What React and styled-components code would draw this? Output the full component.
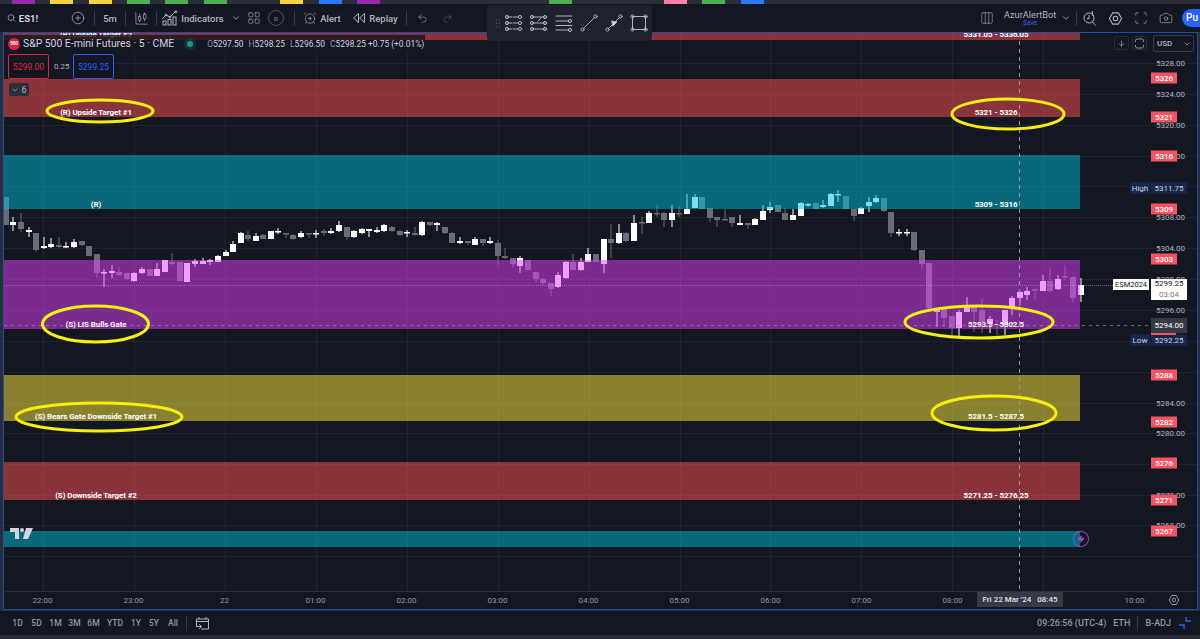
import React from 'react';
import styled, { createGlobalStyle } from 'styled-components';
import { Search, CirclePlus, CandlestickChart, ChevronDown, LayoutGrid, AlarmClockPlus, Undo2, Redo2, Columns3, Scan, Camera, ArrowDown, Zap } from 'lucide-react';

const GlobalStyle = createGlobalStyle`
  html, body { margin: 0; padding: 0; background: #2a2e39; }
  body { font-family: Roboto, "Liberation Sans", sans-serif; overflow: hidden; }
`;

const Page = styled.div`
  width: 1200px;
  height: 639px;
  overflow: hidden;
  position: relative;
  display: flex;
  flex-direction: column;
  background: #2a2e39;
`;

const TabStrip = styled.div`
  height: 4px;
  padding-left: 12px;
  display: flex;
  gap: 15.35px;
`;

const TabMark = styled.span`
  width: 23px;
  background: ${p => p.$color};
`;

const Toolbar = styled.div`
  height: 28px;
  background: #131722;
  display: flex;
  align-items: center;
  color: #b2b5be;
  font-size: 9.5px;
  font-weight: 500;
  padding-left: 7px;
`;

const Tool = styled.div`
  display: flex;
  align-items: center;
  justify-content: center;
  box-sizing: border-box;
  gap: ${p => p.$gap || 3}px;
  width: ${p => p.$w}px;
  margin-left: ${p => p.$ml || 0}px;
  margin-right: ${p => p.$mr || 0}px;
  padding-left: ${p => p.$pl || 0}px;
  flex: none;
  color: ${p => p.$dim ? '#5d606b' : 'inherit'};
`;

const Sep = styled.span`
  width: 1px;
  height: 15px;
  background: #363a45;
  flex: none;
  margin-left: ${p => p.$ml || 0}px;
  margin-right: ${p => p.$mr || 0}px;
`;

const Ticker = styled.b`
  color: #d1d4dc;
  font-size: 9.5px;
`;

const RoundD = styled.span`
  width: 14px;
  height: 14px;
  border: 1px solid #50535e;
  border-radius: 50%;
  font-size: 6px;
  display: flex;
  align-items: center;
  justify-content: center;
  color: #787b86;
`;

const DrawBar = styled.div`
  position: absolute;
  left: 487px;
  top: 5px;
  width: 165px;
  height: 36px;
  border-radius: 4px;
  background: #1e222d;
  display: flex;
  align-items: center;
  padding-left: 8px;
  gap: 5px;
  box-sizing: border-box;
  z-index: 5;
`;

const Grip = styled.span`
  width: 5px;
  height: 10px;
  margin-right: -1px;
  background-image: radial-gradient(#4c4f5a 1px, transparent 1px);
  background-size: 3px 3.5px;
`;

const RightTools = styled.div`
  margin-left: auto;
  display: flex;
  align-items: center;
`;

const BotName = styled.div`
  width: 52px;
  text-align: center;
  line-height: 9px;
  font-size: 9.2px;
  font-weight: 400;
  color: #b2b5be;
  padding-top: 2px;
  white-space: nowrap;
  small { display: block; font-size: 6.5px; color: #2962ff; }
`;

const Publish = styled.div`
  width: 18px;
  height: 18px;
  margin-left: 4px;
  background: #2962ff;
  color: #fff;
  border-radius: 9px 0 0 9px;
  font-size: 10px;
  padding-left: 4px;
  line-height: 18px;
  box-sizing: border-box;
  overflow: hidden;
`;

const Frame = styled.div`
  margin: 0 2px 0 3px;
  height: 578px;
  box-sizing: border-box;
  border: 1px solid #1f4db0;
  background: #131722;
  display: flex;
  flex-direction: column;
`;

const ChartBody = styled.div`
  position: relative;
  height: 558px;
  overflow: hidden;
  display: flex;
`;

const Pane = styled.div`
  position: relative;
  width: 1106px;
  flex: none;
`;

const Layer = styled.svg`
  position: absolute;
  left: 0;
  top: 0;
  pointer-events: none;
`;

const Zone = styled.div`
  position: absolute;
  left: 0;
  width: 1076px;
  top: ${p => p.$top - 33}px;
  height: ${p => p.$height}px;
  background: ${p => p.$color};
  display: flex;
  align-items: flex-end;
  justify-content: space-between;
  color: #fff;
  font-size: 8px;
  font-weight: 700;
  letter-spacing: -0.1px;
  padding-bottom: ${p => p.$pad ?? 0}px;
  box-sizing: border-box;
  line-height: 9px;
`;

const ZoneNote = styled.span`
  width: ${p => p.$side === 'left' ? 184 : 168}px;
  text-align: center;
  white-space: nowrap;
`;

const Legend = styled.div`
  position: absolute;
  left: 0;
  top: 2px;
  height: 17px;
  width: 421px;
  display: flex;
  align-items: center;
  background: rgba(19, 23, 34, 0.82);
  color: #d1d4dc;
  font-size: 10.4px;
  padding-left: 4px;
  box-sizing: border-box;
  white-space: nowrap;
`;

const SymbolBadge = styled.span`
  width: 12px;
  height: 12px;
  flex: none;
  border-radius: 50%;
  background: #d9233a;
  color: #fff;
  font-size: 4.5px;
  font-weight: 700;
  display: flex;
  align-items: center;
  justify-content: center;
  margin-right: 3px;
`;

const LiveDot = styled.span`
  width: 6px;
  height: 6px;
  flex: none;
  border-radius: 50%;
  background: #1a9a80;
  box-shadow: 0 0 0 3px rgba(26, 154, 128, 0.2);
  margin: 0 14px 0 13px;
`;

const Ohlc = styled.span`
  font-size: 8.4px;
  i { font-style: normal; color: #9598a1; margin: 0 0 0 3px; }
  i:first-child { margin-left: 0; }
`;

const QuoteRow = styled.div`
  position: absolute;
  left: 0;
  top: 19px;
  width: 112px;
  height: 27px;
  padding: 2px 0 0 4px;
  box-sizing: border-box;
  display: flex;
  gap: 5px;
  background: rgba(19, 23, 34, 0.82);
  align-items: flex-start;
`;

const Quote = styled.span`
  width: 41px;
  height: 25px;
  box-sizing: border-box;
  border: 1px solid ${p => p.$color};
  border-radius: 2px;
  color: ${p => p.$color};
  background: #131722;
  font-size: 8.5px;
  display: flex;
  align-items: center;
  justify-content: center;
`;

const Spread = styled.span`
  align-self: center;
  color: #b2b5be;
  font-size: 8px;
  width: 14px;
  text-align: center;
`;

const Collapse = styled.div`
  position: absolute;
  left: 5px;
  top: 50px;
  width: 20px;
  height: 13px;
  border-radius: 2px;
  background: #2a2e39;
  color: #b2b5be;
  font-size: 9px;
  display: flex;
  align-items: center;
  justify-content: center;
  gap: 2px;
`;

const TvLogo = styled.svg`
  position: absolute;
  left: 6px;
  top: 494px;
`;

const BoltMark = styled.div`
  position: absolute;
  left: 1069px;
  top: 498px;
  width: 14px;
  height: 14px;
  border-radius: 50%;
  border: 1px solid #a23ec0;
  border-left-color: #4272d6;
  color: #b044d0;
  display: flex;
  align-items: center;
  justify-content: center;
`;

const PriceAxis = styled.div`
  position: relative;
  flex: 1;
  color: #b2b5be;
  font-size: 8px;
`;

const Tick = styled.span`
  position: absolute;
  left: 46px;
  top: ${p => p.$y - 33}px;
  transform: translateY(-50%);
`;

const Tag = styled.span`
  position: absolute;
  left: 41px;
  top: ${p => p.$y - 33}px;
  transform: translateY(-50%);
  width: 26px;
  height: 11px;
  line-height: 11px;
  text-align: center;
  background: #f7525f;
  color: #fff;
  font-size: 8px;
  font-weight: 500;
`;

const NavyTag = styled.span`
  position: absolute;
  left: ${p => p.$x}px;
  top: ${p => p.$y - 33}px;
  transform: translateY(-50%);
  width: ${p => p.$w}px;
  height: 11px;
  line-height: 11px;
  text-align: center;
  background: #14284f;
  color: #d1d4dc;
  font-size: 8px;
`;

const CloseTag = styled.span`
  position: absolute;
  left: 41px;
  top: 246px;
  width: 36px;
  height: 21px;
  background: #fff;
  color: #131722;
  text-align: center;
  font-size: 8px;
  line-height: 10.5px;
  small { display: block; font-size: 8px; color: #787b86; }
`;

const SymbolTag = styled.span`
  position: absolute;
  left: 3px;
  top: 246px;
  width: 36px;
  height: 11px;
  line-height: 11px;
  background: #fff;
  color: #131722;
  text-align: center;
  font-size: 7.5px;
`;

const CrossTag = styled.span`
  position: absolute;
  left: 41px;
  top: 285px;
  width: 36px;
  height: 15px;
  line-height: 15px;
  background: #363a45;
  color: #fff;
  font-size: 8px;
  text-align: center;
  &::after {
    content: '';
    position: absolute;
    left: 0;
    top: 15px;
    width: 25px;
    height: 2px;
    background: #f7525f;
  }
`;

const PaneButton = styled.span`
  position: absolute;
  left: ${p => p.$x}px;
  top: 3px;
  width: 15px;
  height: 14px;
  box-sizing: border-box;
  border: 1px solid #2a2e39;
  border-radius: 3px;
  display: flex;
  align-items: center;
  justify-content: center;
  color: #9598a1;
`;

const CurrencyBox = styled.span`
  position: absolute;
  left: 43px;
  top: 2px;
  width: 41px;
  height: 17px;
  box-sizing: border-box;
  border: 1px solid #363a45;
  border-radius: 2px;
  font-size: 8px;
  font-weight: 500;
  display: flex;
  align-items: center;
  justify-content: space-between;
  padding: 0 2px 0 3px;
  color: #b2b5be;
`;

const TimeAxis = styled.div`
  position: relative;
  height: 18px;
  border-top: 1px solid #2a2e39;
  box-sizing: border-box;
  display: grid;
  grid-template-columns: repeat(13, 91px);
  margin-left: -7px;
  align-items: center;
  color: #9598a1;
  font-size: 8px;
`;

const TimeMark = styled.span`
  text-align: center;
`;

const CrossTime = styled.span`
  position: absolute;
  left: 980px;
  top: 0;
  width: 86px;
  height: 15px;
  line-height: 15px;
  text-align: center;
  background: #363a45;
  color: #e0e3eb;
  font-size: 8px;
  font-weight: 500;
  white-space: pre;
`;

const AxisGear = styled.span`
  position: absolute;
  left: 1171px;
  top: 2px;
  color: #b2b5be;
`;

const BottomBar = styled.div`
  margin-top: 1px;
  height: 24px;
  background: #131722;
  display: flex;
  align-items: center;
  padding: 0 8px 0 8px;
  color: #9598a1;
  font-size: 8.5px;
  font-weight: 500;
`;

const Range = styled.span`
  width: ${p => p.$w || 19}px;
  text-align: center;
  flex: none;
`;

const BarRight = styled.div`
  margin-left: auto;
  display: flex;
  align-items: center;
  gap: 7px;
  font-size: 9px;
`;

const tabs = ['#9c27b0', '#f9d23c', '#f9d23c', '#4caf50', '#4caf50', '#4caf50', 'transparent', '#f9d23c', '#2979ff', '#9c27b0', 'transparent', 'transparent', 'transparent', 'transparent', '#4caf50', 'transparent', 'transparent', '#ff80ab', '#4caf50', '#2979ff'];

const zones = [
  { top: 33, height: 7, color: 'rgba(255,82,82,.5)', left: '(R) Upside Target #2', right: '5331.05 - 5336.05', pad: 1 },
  { top: 79, height: 38, color: 'rgba(255,82,82,.5)', left: '(R) Upside Target #1', right: '5321 - 5326', pad: 0 },
  { top: 155, height: 54, color: 'rgba(0,188,212,.5)', left: '(R)', right: '5309 - 5316', pad: 0 },
  { top: 260, height: 69, color: 'rgba(224,64,251,.5)', left: '(S) LIS Bulls Gate', right: '5293.5 - 5302.5', pad: 0 },
  { top: 375, height: 46, color: 'rgba(255,235,59,.5)', left: '(S) Bears Gate Downside Target #1', right: '5281.5 - 5287.5', pad: 0 },
  { top: 462, height: 38, color: 'rgba(255,82,82,.5)', left: '(S) Downside Target #2', right: '5271.25 - 5276.25', pad: 0 },
  { top: 531, height: 16, color: 'rgba(0,188,212,.5)' },
];

// x, kind, body top, body bottom, wick top, wick bottom (page pixels)
const candles = [
  [6,'d',197,225,197,225],[13,'u',222,225,217,231],[21,'d',222,229,213,232],[29,'u',230,232,227,237],[36,'d',233,250,233,252],
  [44,'u',246,248,237,249],[51,'u',244,247,238,248],[59,'d',245,247,237,248],[66,'u',246,247,242,248],[74,'u',242,247,239,248],
  [82,'d',241,245,241,246],[89,'d',246,256,246,256],[97,'d',254,273,254,278],[104,'u',272,273,269,287],[112,'u',271,273,265,278],
  [119,'d',272,275,267,276],[127,'d',273,279,273,280],[134,'u',273,281,272,282],[142,'u',269,273,267,274],[150,'d',269,276,269,276],
  [157,'u',269,276,263,276],[165,'u',260,272,260,272],[172,'d',262,264,253,265],[180,'d',262,281,262,281],[187,'u',263,282,263,282],
  [195,'u',261,264,259,267],[203,'u',261,264,258,264],[210,'u',260,262,259,265],[218,'u',256,262,255,262],[226,'u',252,256,250,256],
  [233,'u',244,252,241,252],[241,'u',233,243,232,243],[248,'d',235,239,231,241],[256,'u',236,241,233,241],[263,'d',235,239,234,239],
  [271,'u',231,239,231,239],[278,'u',231,232,228,234],[286,'d',233,234,233,238],[293,'d',235,239,234,240],[301,'u',233,237,231,238],
  [309,'d',233,234,233,238],[316,'u',233,234,230,238],[324,'d',231,233,229,236],[331,'u',231,233,228,234],[339,'u',225,231,221,232],
  [347,'d',227,237,227,240],[354,'u',231,237,230,238],[362,'u',229,233,228,234],[369,'u',229,231,229,237],[377,'u',230,232,227,233],
  [384,'u',225,231,224,232],[392,'d',227,231,226,232],[400,'d',231,235,230,236],[407,'u',232,233,230,237],[415,'d',233,235,227,236],
  [422,'u',222,235,221,236],[430,'d',222,225,222,226],[437,'u',223,225,222,231],[445,'d',227,233,227,234],[452,'d',233,243,232,243],
  [460,'u',241,243,237,244],[468,'d',241,243,241,245],[475,'u',239,245,237,245],[483,'d',239,243,239,246],[490,'u',241,243,237,244],
  [498,'d',243,256,240,265],[505,'d',256,258,248,259],[513,'d',258,264,258,267],[520,'u',258,266,256,273],[528,'d',260,270,260,271],
  [536,'d',272,279,272,282],[543,'d',279,283,278,285],[551,'d',283,289,283,296],[558,'u',275,287,272,288],[566,'u',262,278,261,279],
  [573,'d',262,270,254,270],[581,'u',262,270,258,271],[588,'u',254,262,248,262],[596,'d',254,262,254,262],[604,'u',239,264,239,273],
  [611,'d',239,243,224,258],[619,'u',233,243,224,244],[626,'d',233,241,232,242],[634,'u',223,241,215,241],[642,'d',222,223,217,234],
  [649,'u',213,223,211,223],[657,'d',213,214,205,217],[664,'d',213,220,212,227],[672,'u',213,220,205,227],[679,'d',213,214,206,217],
  [687,'u',209,214,194,214],[695,'u',197,208,194,208],[702,'d',197,209,197,209],[710,'d',208,218,208,222],[717,'d',217,220,217,227],
  [725,'d',219,220,209,220],[732,'d',217,223,217,227],[740,'u',223,225,215,225],[748,'d',223,225,223,229],[755,'u',219,225,218,225],
  [763,'u',211,220,205,220],[770,'u',207,210,202,213],[778,'d',205,212,205,212],[785,'d',213,220,208,220],[793,'u',215,220,209,220],
  [801,'u',203,216,202,216],[808,'u',204,205,203,207],[816,'d',203,209,203,209],[823,'u',205,207,200,208],[831,'u',194,206,193,206],
  [838,'u',194,195,190,202],[846,'d',196,209,196,209],[854,'d',209,216,209,221],[861,'u',208,214,207,214],[869,'u',202,206,197,212],
  [876,'u',198,202,195,203],[884,'d',198,211,198,212],[891,'d',212,233,212,237],[899,'u',232,233,229,236],[907,'u',232,233,229,236],
  [914,'d',232,250,232,251],[922,'d',250,264,250,269],[929,'d',263,308,263,309],[937,'u',310,312,310,327],[944,'d',309,318,309,327],
  [952,'d',316,328,316,337],[959,'u',312,328,310,337],[967,'u',306,312,297,312],[974,'d',307,312,307,332],[982,'d',310,322,298,333],
  [990,'u',319,324,316,333],[997,'d',324,325,320,335],[1005,'u',310,325,310,335],[1012,'u',298,309,296,315],[1020,'u',292,298,291,305],
  [1027,'u',291,295,287,300],[1035,'d',289,290,289,300],[1043,'u',281,291,275,291],[1050,'d',281,291,267,292],[1058,'u',279,289,275,290],
  [1065,'d',276,277,265,280],[1073,'d',277,298,276,302],[1081,'u',285,295,278,302],
];

const ellipses = [
  [100, 111, 53, 11], [1008, 114, 56, 15], [95.5, 324, 53, 18], [979, 322, 74, 16], [99, 417, 83, 14], [994, 413, 62, 17],
];

const ticks = [[63,'5328.00'],[94,'5324.00'],[125,'5320.00'],[156,'5316.00'],[217,'5308.00'],[248,'5304.00'],[279,'5300.00'],[310,'5296.00'],[403,'5284.00'],[433,'5280.00'],[495,'5272.00'],[525,'5268.00']];
const tags = [[78,'5326'],[117,'5321'],[156,'5316'],[209,'5309'],[259,'5303'],[375,'5288'],[422,'5282'],[463,'5276'],[500,'5271'],[531,'5267']];
const times = ['22:00','23:00','22','01:00','02:00','03:00','04:00','05:00','06:00','07:00','08:00','','10:00'];
const ranges = [['1D'],['5D'],['1M'],['3M'],['6M'],['YTD',24],['1Y',18],['5Y',18],['All',20]];

// small drawing toolbar glyphs
const DrawIcon = ({ children }) => (
  <svg width="20" height="20" viewBox="0 0 20 20" fill="none" stroke="#b2b5be" strokeWidth="1" strokeLinecap="round">{children}</svg>
);

const Knob = ({ x, y }) => <circle cx={x} cy={y} r="1.6" />;

const drawIcons = [
  <><path d="M3 4h13M3 10h13M3 16h13" strokeDasharray="5 1.5" /><Knob x={3} y={4} /><Knob x={16} y={4} /><Knob x={3} y={10} /><Knob x={16} y={10} /><Knob x={3} y={16} /><Knob x={16} y={16} /></>,
  <><path d="M3 4h13M3 10h13M3 16h13" /><path d="M9 8l3-3" /><Knob x={3} y={4} /><Knob x={16} y={4} /><Knob x={3} y={10} /><Knob x={16} y={10} /><Knob x={3} y={16} /><Knob x={16} y={16} /></>,
  <><path d="M2 3h16M2 8h13M2 12.5h16M2 17h13" /><Knob x={16} y={8} /><Knob x={16} y={17} /></>,
  <><path d="M4.5 15.5L15.5 4.5" /><Knob x={3.5} y={16.5} /><Knob x={16.5} y={3.5} /></>,
  <><path d="M4.5 15.5L15.5 4.5" /><Knob x={3.5} y={16.5} /><Knob x={16.5} y={3.5} /><path d="M8 8l5 1-4 4z" fill="#d1d4dc" /></>,
  <><rect x="3.5" y="3.5" width="13" height="13" /><Knob x={3.5} y={3.5} /><Knob x={16.5} y={3.5} /><Knob x={3.5} y={16.5} /><Knob x={16.5} y={16.5} /></>,
];

const IndicatorsIcon = () => (
  <svg width="18" height="16" viewBox="0 0 18 16" fill="none" stroke="currentColor" strokeWidth="1">
    <path d="M1 9l4-4 4 2 6-6" />
    <circle cx="5" cy="5" r="1" /><circle cx="9" cy="7" r="1" /><circle cx="15" cy="1.8" r="1" />
    <rect x="2" y="11" width="3" height="4" /><rect x="7" y="9.5" width="3" height="5.5" /><rect x="12" y="7" width="3" height="8" />
  </svg>
);

const ReplayIcon = () => (
  <svg width="14" height="12" viewBox="0 0 14 12" fill="none" stroke="currentColor" strokeWidth="1">
    <path d="M6.5 1.5L1.5 6l5 4.5zM12.5 1.5L7.5 6l5 4.5z" strokeLinejoin="round" />
  </svg>
);

const GearHex = ({ size = 15 }) => (
  <svg width={size} height={size} viewBox="0 0 16 16" fill="none" stroke="currentColor" strokeWidth="1.1">
    <path d="M5 2h6l3.5 6-3.5 6H5L1.5 8z" strokeLinejoin="round" /><circle cx="8" cy="8" r="2.4" />
  </svg>
);

const ReplayClock = () => (
  <svg width="16" height="18" viewBox="0 0 16 18" fill="none" stroke="currentColor" strokeWidth="1">
    <circle cx="7" cy="9" r="5" /><path d="M10 2l1 5M10.5 13l3 3.5M7 6v3.5h-2" />
  </svg>
);

const ResetIcon = () => (
  <svg width="11" height="11" viewBox="0 0 11 11" fill="none" stroke="currentColor" strokeWidth="1">
    <path d="M1.5 4V2.8A1.8 1.8 0 0 1 3.3 1h4.4a1.8 1.8 0 0 1 1.8 1.8V4M1.5 7v1.2A1.8 1.8 0 0 0 3.3 10h4.4a1.8 1.8 0 0 0 1.8-1.8V7" />
  </svg>
);

const SessionIcon = () => (
  <svg width="15" height="15" viewBox="0 0 15 15" fill="none" stroke="#b2b5be" strokeWidth="1">
    <path d="M4 1v2M11 1v2M1.5 10V3h12v10H6M1.5 5.5h12M1 10.5h5M4 8l2.5 2.5L4 13" />
  </svg>
);

const BarSquiggle = () => (
  <svg width="14" height="14" viewBox="0 0 14 14" fill="none" stroke="#2962ff" strokeWidth="1.3">
    <path d="M1 9h5v4M8 1v4h5" />
  </svg>
);

const grid = () => {
  const xs = [43, 134, 225, 316, 407, 498, 589, 680, 770, 861, 952, 1043];
  const ys = [63, 94, 125, 156, 186, 217, 248, 279, 310, 341, 372, 403, 433, 464, 495, 525, 556];
  return (
    <g stroke="#1f2430" strokeWidth="1">
      {xs.map(x => <path key={x} d={`M${x + 0.5} 33V591`} />)}
      {ys.map(y => <path key={y} d={`M4 ${y + 0.5}H1197`} />)}
    </g>
  );
};

export default function App() {
  return (
    <Page>
      <GlobalStyle />
      <TabStrip>
        {tabs.map((c, i) => <TabMark key={i} $color={c} />)}
      </TabStrip>

      <Toolbar>
        <Tool $w={31} $gap={3}><Search size={10} /><Ticker>ES1!</Ticker></Tool>
        <Tool $w={48} $pl={32}><CirclePlus size={14} strokeWidth={1.2} /></Tool>
        <Tool $w={8} />
        <Sep />
        <Tool $w={30}>5m</Tool>
        <Sep />
        <Tool $w={30}><CandlestickChart size={15} strokeWidth={1.1} /></Tool>
        <Sep />
        <Tool $w={71} $gap={2}><IndicatorsIcon />Indicators</Tool>
        <Tool $w={16}><ChevronDown size={10} /></Tool>
        <Tool $w={20}><LayoutGrid size={14} strokeWidth={1} /></Tool>
        <Tool $w={24}><RoundD>D</RoundD></Tool>
        <Tool $w={6} />
        <Sep />
        <Tool $w={46} $gap={3} $ml={4}><AlarmClockPlus size={14} strokeWidth={1.1} />Alert</Tool>
        <Tool $w={50} $gap={3} $ml={5}><ReplayIcon />Replay</Tool>
        <Tool $w={6} />
        <Sep />
        <Tool $w={31}><Undo2 size={11} strokeWidth={1.2} /></Tool>
        <Tool $w={18} $dim><Redo2 size={11} strokeWidth={1.2} /></Tool>
        <RightTools>
          <Tool $w={22} $mr={6}><Columns3 size={14} strokeWidth={1} /></Tool>
          <BotName>AzurAlertBot<small>Save</small></BotName>
          <Tool $w={20}><ChevronDown size={10} /></Tool>
          <Sep />
          <Tool $w={26}><ReplayClock /></Tool>
          <Tool $w={25}><GearHex /></Tool>
          <Tool $w={25}><Scan size={14} strokeWidth={1.1} /></Tool>
          <Tool $w={25}><Camera size={14} strokeWidth={1.1} /></Tool>
          <Publish>Pu</Publish>
        </RightTools>
      </Toolbar>

      <DrawBar>
        <Grip />
        {drawIcons.map((g, i) => <DrawIcon key={i}>{g}</DrawIcon>)}
      </DrawBar>

      <Frame>
        <ChartBody>
          <Layer width="1193" height="558" viewBox="4 33 1193 558">
            {grid()}
            {candles.map(([x, kind, top, bot, wTop, wBot], i) => {
              const color = kind === 'u' ? '#ffffff' : '#6a6d78';
              return (
                <g key={i} fill={color}>
                  <rect x={x - 0.5} y={wTop} width="1" height={wBot - wTop} />
                  <rect x={x - 3} y={top} width="6" height={Math.max(bot - top, 1.5)} />
                </g>
              );
            })}
          </Layer>

          <Pane>
            {zones.map(z => (
              <Zone key={z.top} $top={z.top} $height={z.height} $color={z.color} $pad={z.pad}>
                {z.left && <ZoneNote $side="left">{z.left}</ZoneNote>}
                {z.right && <ZoneNote $side="right">{z.right}</ZoneNote>}
              </Zone>
            ))}
            <Legend>
              <SymbolBadge>500</SymbolBadge>
              S&amp;P 500 E-mini Futures · 5 · CME
              <LiveDot />
              <Ohlc><i>O</i>5297.50 <i>H</i>5298.25 <i>L</i>5296.50 <i>C</i>5298.25 +0.75 (+0.01%)</Ohlc>
            </Legend>
            <QuoteRow>
              <Quote $color="#e0263c">5299.00</Quote>
              <Spread>0.25</Spread>
              <Quote $color="#2962ff">5299.25</Quote>
            </QuoteRow>
            <Collapse><ChevronDown size={8} />6</Collapse>
            <TvLogo width="24" height="13" viewBox="0 0 24 13" fill="#d1d4dc">
              <path d="M0 1h9v11H5V5H0z" /><circle cx="12" cy="3" r="2" /><path d="M16 1h7l-5 11h-5z" />
            </TvLogo>
            <BoltMark><Zap size={8} fill="currentColor" /></BoltMark>
          </Pane>

          <PriceAxis>
            {ticks.map(([y, t]) => <Tick key={t} $y={y}>{t}</Tick>)}
            {tags.map(([y, t]) => <Tag key={t} $y={y}>{t}</Tag>)}
            <NavyTag $x={20} $w={20} $y={188}>High</NavyTag>
            <NavyTag $x={41} $w={36} $y={188}>5311.75</NavyTag>
            <NavyTag $x={20} $w={20} $y={340}>Low</NavyTag>
            <NavyTag $x={41} $w={36} $y={340}>5292.25</NavyTag>
            <CrossTag>5294.00</CrossTag>
            <SymbolTag>ESM2024</SymbolTag>
            <CloseTag>5299.25<small>03:04</small></CloseTag>
            <PaneButton $x={4}><ArrowDown size={9} /></PaneButton>
            <PaneButton $x={22}><ResetIcon /></PaneButton>
            <CurrencyBox>USD<ChevronDown size={8} /></CurrencyBox>
          </PriceAxis>

          <Layer width="1193" height="558" viewBox="4 33 1193 558" fill="none">
            <path d="M1019.5 33V591" stroke="#9598a1" strokeDasharray="4 4" />
            <path d="M4 285.5H1113" stroke="#c9a0d8" strokeOpacity="0.5" strokeDasharray="1 1" />
            <path d="M4 325.5H1150" stroke="#9598a1" strokeOpacity="0.65" strokeDasharray="3 4" />
            {ellipses.map(([cx, cy, rx, ry]) => (
              <ellipse key={cx} cx={cx} cy={cy} rx={rx} ry={ry} stroke="#f6ee0e" strokeWidth="3" />
            ))}
          </Layer>
        </ChartBody>

        <TimeAxis>
          {times.map((t, i) => <TimeMark key={i}>{t}</TimeMark>)}
          <CrossTime>{"Fri 22 Mar '24   08:45"}</CrossTime>
          <AxisGear><GearHex size={12} /></AxisGear>
        </TimeAxis>
      </Frame>

      <BottomBar>
        {ranges.map(([r, w]) => <Range key={r} $w={w}>{r}</Range>)}
        <Sep $ml={3} $mr={8} />
        <SessionIcon />
        <BarRight>
          <span>09:26:56 (UTC-4)</span>
          <span>ETH</span>
          <Sep />
          <span>B-ADJ</span>
          <BarSquiggle />
        </BarRight>
      </BottomBar>
    </Page>
  );
}
